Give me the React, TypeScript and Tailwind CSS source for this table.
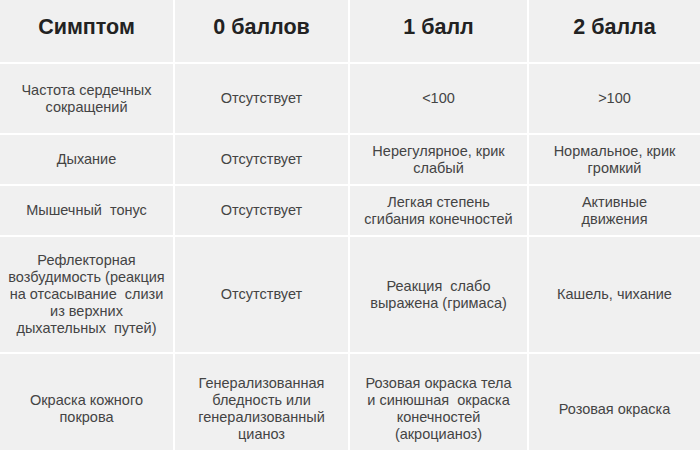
const headers = ["Симптом", "0 баллов", "1 балл", "2 балла"];

// строки таблицы Апгар, переносы как в оригинале
const rows: string[][][] = [
  [["Частота сердечных", "сокращений"], ["Отсутствует"], ["<100"], [">100"]],
  [["Дыхание"], ["Отсутствует"], ["Нерегулярное, крик", "слабый"], ["Нормальное, крик", "громкий"]],
  [["Мышечный  тонус"], ["Отсутствует"], ["Легкая степень", "сгибания конечностей"], ["Активные", "движения"]],
  [
    ["Рефлекторная", "возбудимость (реакция", "на отсасывание  слизи", "из верхних", "дыхательных  путей)"],
    ["Отсутствует"],
    ["Реакция  слабо", "выражена (гримаса)"],
    ["Кашель, чихание"],
  ],
  [
    ["Окраска кожного", "покрова"],
    ["Генерализованная", "бледность или", "генерализованный", "цианоз"],
    ["Розовая окраска тела", "и синюшная  окраска", "конечностей", "(акроцианоз)"],
    ["Розовая окраска"],
  ],
];

export default function App() {
  return (
    <div
      className="w-[700px] h-[450px] bg-white grid grid-cols-[173px_173px_177px_1fr] grid-rows-[62px_69px_49px_49px_115px_110px] gap-[2px] overflow-hidden"
      style={{ fontFamily: '"Liberation Sans", Arial, sans-serif' }}
    >
      {headers.map((h) => (
        <div
          key={h}
          className="bg-[#f0f0f0] flex items-center justify-center pb-[8px] text-[21.5px] font-bold text-[#222]"
        >
          {h}
        </div>
      ))}
      {rows.map((row, i) =>
        row.map((cell, j) => (
          <div
            key={`${i}-${j}`}
            className="bg-[#f0f0f0] flex flex-col items-center justify-center text-center text-[14.5px] leading-[17px] text-[#444] px-1 whitespace-pre"
          >
            {cell.map((line, k) => (
              <span key={k}>{line}</span>
            ))}
          </div>
        ))
      )}
    </div>
  );
}
